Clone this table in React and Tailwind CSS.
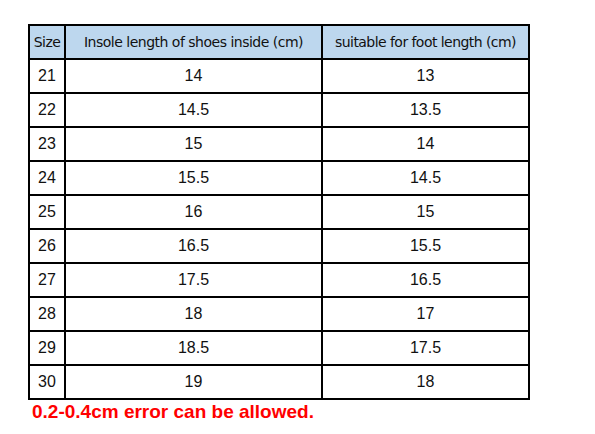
import React from 'react'

const rows = [
  ['21', '14', '13'],
  ['22', '14.5', '13.5'],
  ['23', '15', '14'],
  ['24', '15.5', '14.5'],
  ['25', '16', '15'],
  ['26', '16.5', '15.5'],
  ['27', '17.5', '16.5'],
  ['28', '18', '17'],
  ['29', '18.5', '17.5'],
  ['30', '19', '18'],
]

export default function App() {
  return (
    <div className="w-[595px] h-[434px] bg-white pt-[24px] pl-[28px]" style={{ fontFamily: '"Liberation Sans", Arial, sans-serif' }}>
      <table className="border-collapse border-2 border-black text-[#111] table-fixed w-[500px]">
        <colgroup>
          <col className="w-[36px]" />
          <col className="w-[257px]" />
          <col className="w-[207px]" />
        </colgroup>
        <thead>
          <tr className="h-[34px] bg-[#bdd7ee]" style={{ fontFamily: '"DejaVu Sans", Tahoma, sans-serif' }}>
            <th className="border-2 border-black font-normal text-[14px] tracking-[-0.5px]">Size</th>
            <th className="border-2 border-black font-normal text-[14px] tracking-[-0.5px]">Insole length of shoes inside (cm)</th>
            <th className="border-2 border-black font-normal text-[14px] tracking-[-0.55px]">suitable for foot length (cm)</th>
          </tr>
        </thead>
        <tbody>
          {rows.map(r => (
            <tr key={r[0]} className="h-[34px] text-[16px]">
              <td className="border-2 border-black text-center">{r[0]}</td>
              <td className="border-2 border-black text-center">{r[1]}</td>
              <td className="border-2 border-black text-center">{r[2]}</td>
            </tr>
          ))}
        </tbody>
      </table>
      <p className="text-[#ff0000] font-bold text-[19px] pl-[4px] leading-[22px] mt-[1px]">0.2-0.4cm error can be allowed.</p>
    </div>
  )
}
